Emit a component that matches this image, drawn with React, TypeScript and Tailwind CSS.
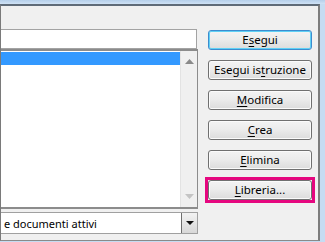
import React from "react";

const font = { fontFamily: '"Noto Sans", "Open Sans", sans-serif' };

function Btn({ label, u, def }: { label: string; u: number; def?: boolean }) {
  const before = label.slice(0, u);
  const ch = label.slice(u, u + 1);
  const after = label.slice(u + 1);
  return (
    <div
      className={
        "h-[20px] w-[104px] rounded-[3px] border flex items-center justify-center text-[11.5px] leading-none text-black bg-gradient-to-b from-[#f3f3f3] via-[#ebebeb] to-[#dcdcdc] " +
        (def
          ? "border-[#3c8ccf] shadow-[inset_0_0_0_1px_#5fd0f5]"
          : "border-[#707070] shadow-[inset_0_0_0_1px_#fbfbfb]")
      }
    >
      <span>
        {before}
        <span className="underline underline-offset-2">{ch}</span>
        {after}
      </span>
    </div>
  );
}

export default function App() {
  return (
    <div className="w-[325px] h-[242px] bg-[#c5dcf2] flex flex-col overflow-hidden" style={font}>
      <div className="h-[4px] bg-gradient-to-b from-[#b5cfea] to-[#cfe2f5]" />
      <div className="flex">
        <div className="w-[320px] h-[237px] bg-[#f0f0f0] border-t-2 border-t-[#5f6b78] border-l border-l-[#7a7a7a] border-r-2 border-r-[#7d7d7d] border-b border-b-[#8a8a8a] flex">
          <div className="w-[197px] flex flex-col pt-[23px]">
            <div className="h-[20px] w-[196px] bg-white border border-l-0 border-[#a3a3a3]" />
            <div className="h-[160px] w-[197px] bg-white border-t-2 border-b-2 border-r border-[#8c8c8c] flex">
              <div className="flex-1">
                <div className="h-[13px] mt-[1px] bg-[#3399ff]" />
              </div>
              <div className="w-[17px] bg-[#f0f0f0] border-l border-[#e3e3e3] flex flex-col items-center justify-between py-[8px]">
                <svg width="9" height="5" viewBox="0 0 9 5"><path d="M4.5 0 L9 5 L0 5 Z" fill="#8a8a8a" /></svg>
                <svg width="9" height="5" viewBox="0 0 9 5"><path d="M0 0 L9 0 L4.5 5 Z" fill="#c4c4c4" /></svg>
              </div>
            </div>
            <div className="mt-[3px] h-[22px] w-[197px] bg-white border border-l-0 border-[#a0a0a0] flex items-center">
              <span className="flex-1 pl-[3px] text-[11px] text-black leading-none">e documenti attivi</span>
              <div className="w-[16px] h-[20px] border-l border-[#6e6e6e] bg-gradient-to-b from-[#f2f2f2] to-[#d8d8d8] flex items-center justify-center">
                <svg width="8" height="4" viewBox="0 0 8 4"><path d="M0 0 L8 0 L4 4 Z" fill="#111" /></svg>
              </div>
            </div>
          </div>
          <div className="ml-[7px] pt-[24px] flex flex-col items-start">
            <div className="flex flex-col gap-[10px] pl-[3px]">
              <Btn label="Esegui" u={1} def />
              <Btn label="Esegui istruzione" u={9} />
              <Btn label="Modifica" u={0} />
              <Btn label="Crea" u={0} />
              <Btn label="Elimina" u={0} />
            </div>
            <div className="mt-[7px] border-[3px] border-[#e5077f]">
              <Btn label="Libreria..." u={0} />
            </div>
          </div>
        </div>
        <div className="flex-1" />
      </div>
    </div>
  );
}
